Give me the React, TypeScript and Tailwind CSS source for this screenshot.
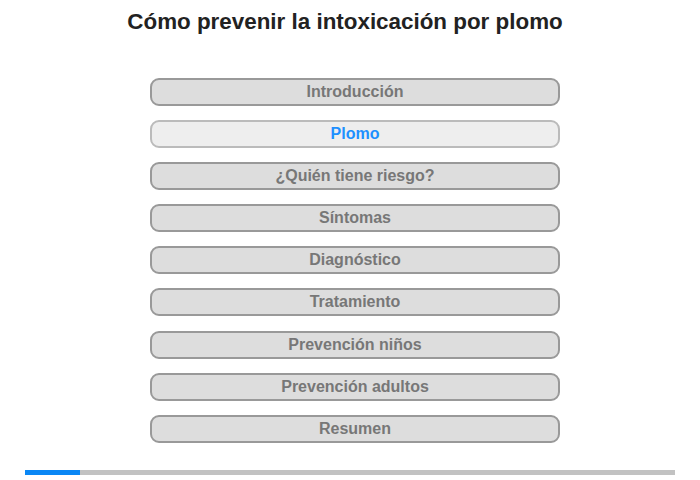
const items = [
  'Introducción',
  'Plomo',
  '¿Quién tiene riesgo?',
  'Síntomas',
  'Diagnóstico',
  'Tratamiento',
  'Prevención niños',
  'Prevención adultos',
  'Resumen',
];

export default function App() {
  const active = 1;
  return (
    <div className="flex h-[480px] w-[700px] flex-col bg-white font-['Liberation_Sans',Arial,sans-serif]">
      <h1 className="mt-[8px] h-[28px] text-center text-[22.4px] font-bold leading-[28px] text-[#222]">
        <span className="relative left-[-5px]">Cómo prevenir la intoxicación por plomo</span>
      </h1>
      <div className="mt-[42px] flex flex-col items-center gap-[14.1px] pl-[10px]">
        {items.map((label, i) => (
          <button
            key={label}
            className={`h-[28px] w-[410px] rounded-[9px] border-2 text-[16px] font-bold leading-[24px] ${
              i === active
                ? 'border-[#bbb] bg-[#eee] text-[#1e90ff]'
                : 'border-[#999] bg-[#ddd] text-[#777]'
            }`}
          >
            {label}
          </button>
        ))}
      </div>
      <div className="mx-[25px] mt-[27px] flex h-[5px] bg-[#c2c2c2]">
        <div className="w-[55px] bg-[#0a87f5]" />
      </div>
    </div>
  );
}
